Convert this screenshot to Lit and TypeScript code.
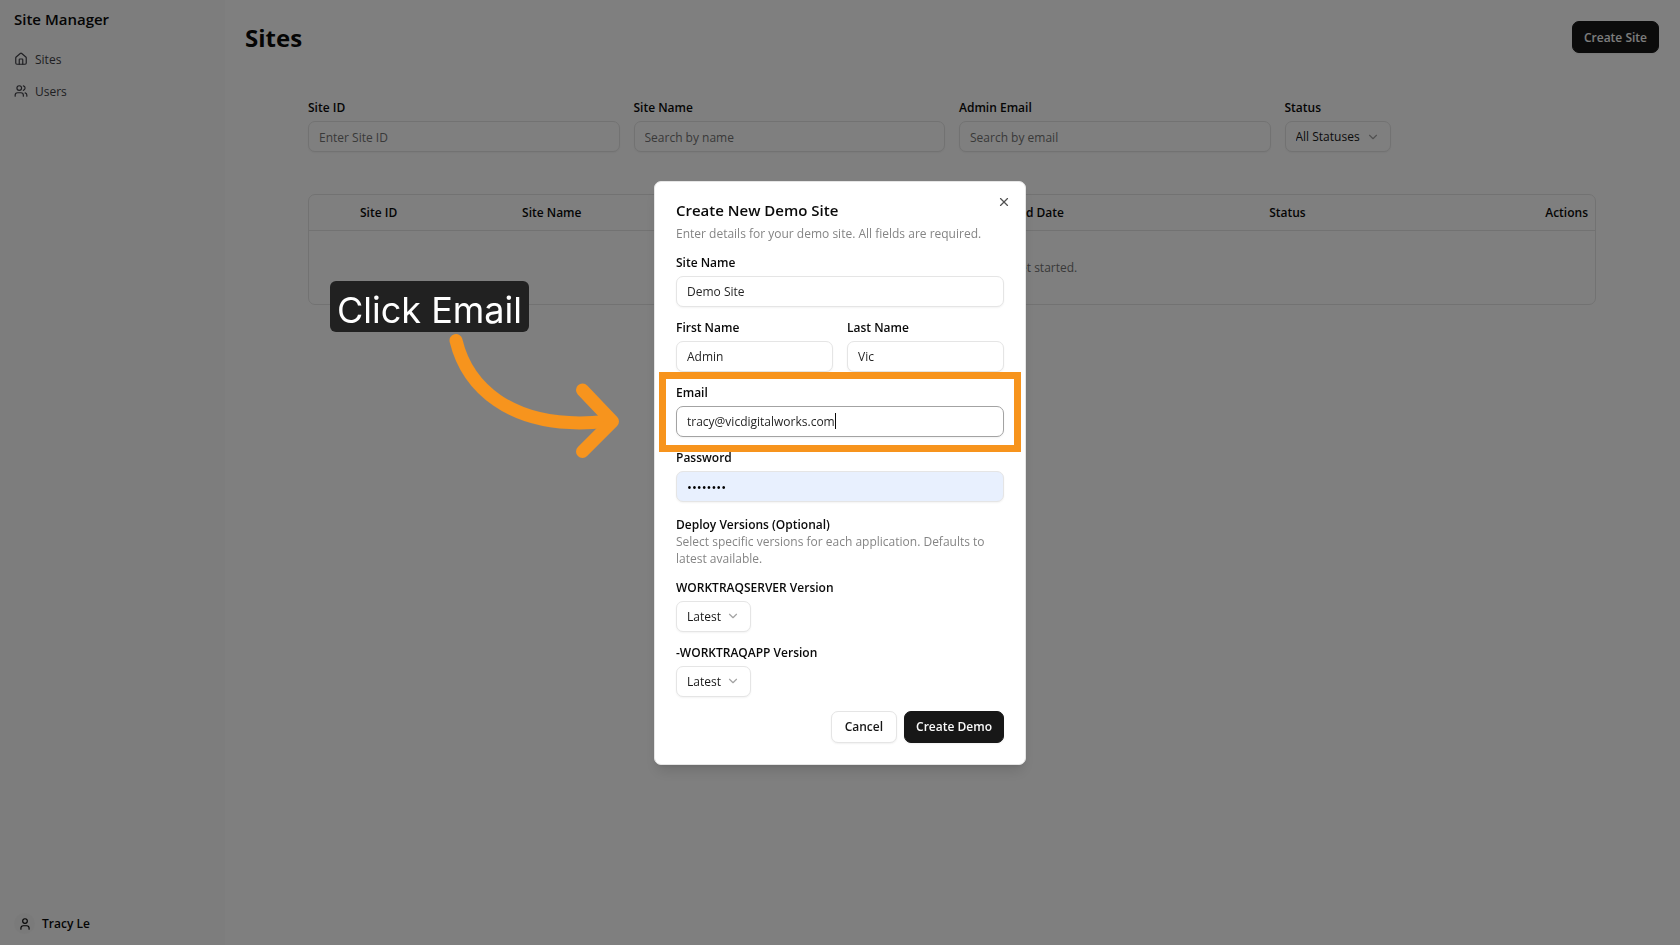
import { LitElement, html, css, svg } from "lit";
import { customElement, property, state, query } from "lit/decorators.js";

const icon = (body: unknown, size = 14, width = 2) => html`<svg
  class="icon"
  width=${size}
  height=${size}
  viewBox="0 0 24 24"
  fill="none"
  stroke="currentColor"
  stroke-width=${width}
  stroke-linecap="round"
  stroke-linejoin="round"
  aria-hidden="true"
>${body}</svg>`;

const house = svg`<path d="M15 21v-8a1 1 0 0 0-1-1h-4a1 1 0 0 0-1 1v8"/><path d="M3 10a2 2 0 0 1 .709-1.528l7-5.999a2 2 0 0 1 2.582 0l7 5.999A2 2 0 0 1 21 10v9a2 2 0 0 1-2 2H5a2 2 0 0 1-2-2z"/>`;
const users = svg`<path d="M16 21v-2a4 4 0 0 0-4-4H6a4 4 0 0 0-4 4v2"/><circle cx="9" cy="7" r="4"/><path d="M22 21v-2a4 4 0 0 0-3-3.87"/><path d="M16 3.13a4 4 0 0 1 0 7.75"/>`;
const user = svg`<path d="M19 21v-2a4 4 0 0 0-4-4H9a4 4 0 0 0-4 4v2"/><circle cx="12" cy="7" r="4"/>`;
const chevron = svg`<path d="m6 9 6 6 6-6"/>`;
const cross = svg`<path d="M18 6 6 18"/><path d="m6 6 12 12"/>`;

const shared = css`
  * {
    box-sizing: border-box;
  }
  :host {
    display: block;
    font-family: "Open Sans", "Noto Sans", sans-serif;
    font-size: 12px;
    line-height: 17px;
    color: #0a0a0a;
  }
  h1,
  h2,
  h3,
  p {
    margin: 0;
  }
  .icon {
    display: block;
    flex: none;
  }
  button {
    font: inherit;
    font-weight: 600;
    height: 32px;
    padding: 0 13px;
    border-radius: 7px;
    border: 1px solid #e5e5e5;
    background: #fff;
    color: #171717;
    white-space: nowrap;
    box-shadow: 0 1px 2px rgba(0, 0, 0, 0.06);
  }
  button.primary {
    border-color: #171717;
    background: #171717;
    color: #fafafa;
    padding: 0 11px;
  }
`;

@customElement("text-field")
class TextField extends LitElement {
  static styles = [
    shared,
    css`
      .field {
        display: grid;
        gap: 7px;
      }
      label {
        font-weight: 600;
        line-height: 13px;
      }
      .box {
        display: grid;
        align-items: center;
        position: relative;
      }
      input {
        width: 100%;
        height: 31px;
        padding: 1px 10px 0;
        border: 1px solid #e5e5e5;
        border-radius: 7px;
        background: #fff;
        color: #262626;
        font: inherit;
        outline: none;
        box-shadow: 0 1px 2px rgba(0, 0, 0, 0.05);
      }
      input::placeholder {
        color: #737373;
        opacity: 1;
      }
      .active input {
        border-color: #a3a3a3;
      }
      .filled input {
        background: #e8f0fe;
        color: #000;
        font-size: 13px;
      }
      .caret {
        position: absolute;
        width: 1px;
        height: 16px;
        background: #0a0a0a;
      }
    `,
  ];
  @property() label = "";
  @property() type = "text";
  @property() value = "";
  @property() hint = "";
  @property({ type: Boolean }) active = false;
  @property({ type: Boolean }) filled = false;
  @state() private caret = 0;
  @query("input") private input!: HTMLInputElement;

  firstUpdated() {
    if (!this.active) return;
    const ctx = document.createElement("canvas").getContext("2d")!;
    const s = getComputedStyle(this.input);
    ctx.font = `${s.fontWeight} ${s.fontSize} ${s.fontFamily}`;
    this.caret = Math.round(11 + ctx.measureText(this.value).width);
  }

  render() {
    return html`<div class="field ${this.active ? "active" : ""} ${this.filled ? "filled" : ""}">
      <label for="control">${this.label}</label>
      <div class="box">
        <input
          id="control"
          type=${this.type}
          .value=${this.value}
          placeholder=${this.hint}
          autocomplete="off"
        />
        ${this.caret ? html`<span class="caret" style="left:${this.caret}px"></span>` : ""}
      </div>
    </div>`;
  }
}

@customElement("select-field")
class SelectField extends LitElement {
  static styles = [
    shared,
    css`
      .field {
        display: grid;
        gap: 7px;
        justify-items: start;
      }
      label {
        font-weight: 600;
        line-height: 13px;
      }
      .box {
        display: inline-grid;
        align-items: center;
      }
      select,
      .mark {
        grid-area: 1 / 1;
      }
      select {
        appearance: none;
        height: 31px;
        padding: 0 29px 0 10px;
        border: 1px solid #e5e5e5;
        border-radius: 7px;
        background: #fff;
        color: #171717;
        font: inherit;
        box-shadow: 0 1px 2px rgba(0, 0, 0, 0.05);
      }
      .mark {
        justify-self: end;
        margin-right: 11px;
        color: #a3a3a3;
        pointer-events: none;
      }
    `,
  ];
  @property() label = "";
  @property({ type: Array }) options: string[] = [];
  render() {
    return html`<div class="field">
      <label for="control">${this.label}</label>
      <div class="box">
        <select id="control">${this.options.map((o) => html`<option>${o}</option>`)}</select>
        <span class="mark">${icon(chevron)}</span>
      </div>
    </div>`;
  }
}

@customElement("side-nav")
class SideNav extends LitElement {
  static styles = [
    shared,
    css`
      :host {
        display: flex;
      }
      aside {
        flex: 1;
        display: flex;
        flex-direction: column;
        padding: 9px 14px 11px;
        background: #fafafa;
      }
      .brand {
        font-size: 15px;
        font-weight: 600;
        line-height: 20px;
      }
      nav {
        display: grid;
        gap: 4px;
        margin-top: 16px;
      }
      a {
        display: flex;
        align-items: center;
        gap: 7px;
        height: 28px;
        color: #3f3f46;
        text-decoration: none;
      }
      .account {
        display: flex;
        align-items: center;
        gap: 7px;
        margin-top: auto;
        font-weight: 600;
      }
      .avatar {
        display: grid;
        place-items: center;
        width: 21px;
        height: 21px;
        border-radius: 50%;
        background: #f5f5f5;
      }
    `,
  ];
  render() {
    return html`<aside>
      <div class="brand">Site Manager</div>
      <nav>
        <a href="#sites">${icon(house)}Sites</a>
        <a href="#users">${icon(users)}Users</a>
      </nav>
      <div class="account"><span class="avatar">${icon(user)}</span>Tracy Le</div>
    </aside>`;
  }
}

@customElement("sites-page")
class SitesPage extends LitElement {
  static styles = [
    shared,
    css`
      main {
        padding: 21px 21px 21px 20px;
      }
      header {
        display: flex;
        justify-content: space-between;
        align-items: flex-start;
      }
      h1 {
        font-size: 24px;
        line-height: 34px;
        font-weight: 700;
      }
      .content {
        max-width: 1288px;
        margin: 46px auto 0;
      }
      .filters {
        display: grid;
        grid-template-columns: repeat(4, minmax(0, 1fr));
        gap: 14px;
        margin-bottom: 42px;
      }
      .frame {
        border: 1px solid #e5e5e5;
        border-radius: 7px;
      }
      table {
        width: 100%;
        table-layout: fixed;
        border-collapse: collapse;
      }
      th {
        height: 35px;
        padding: 0 7px;
        text-align: left;
        font-weight: 600;
        border-bottom: 1px solid #e5e5e5;
      }
      th:last-child {
        text-align: right;
      }
      td {
        height: 74px;
        text-align: center;
        color: #737373;
      }
      .pick {
        width: 44px;
      }
      .id {
        width: 12.6%;
      }
      .name {
        width: 36.2%;
      }
      .date {
        width: 21.9%;
      }
    `,
  ];
  render() {
    return html`<main>
      <header>
        <h1>Sites</h1>
        <button class="primary">Create Site</button>
      </header>
      <div class="content">
        <div class="filters">
          <text-field label="Site ID" hint="Enter Site ID"></text-field>
          <text-field label="Site Name" hint="Search by name"></text-field>
          <text-field label="Admin Email" hint="Search by email"></text-field>
          <select-field label="Status" .options=${["All Statuses"]}></select-field>
        </div>
        <div class="frame">
          <table>
            <thead>
              <tr>
                <th class="pick"></th>
                <th class="id">Site ID</th>
                <th class="name">Site Name</th>
                <th class="date">Created Date</th>
                <th>Status</th>
                <th>Actions</th>
              </tr>
            </thead>
            <tbody>
              <tr>
                <td colspan="6">No sites found yet. Create one to get started.</td>
              </tr>
            </tbody>
          </table>
        </div>
      </div>
    </main>`;
  }
}

@customElement("create-dialog")
class CreateDialog extends LitElement {
  static styles = [
    shared,
    css`
      .dialog {
        position: relative;
        width: 372px;
        max-width: 100vw;
        padding: 21px;
        border: 1px solid #e5e5e5;
        border-radius: 7px;
        background: #fff;
        box-shadow: 0 9px 14px -3px rgba(0, 0, 0, 0.12), 0 3px 5px -3px rgba(0, 0, 0, 0.12);
      }
      .close {
        position: absolute;
        top: 13px;
        right: 14px;
        width: 14px;
        height: 14px;
        padding: 0;
        border: 0;
        background: none;
        box-shadow: none;
        color: #525252;
      }
      h2 {
        font-size: 15px;
        line-height: 15px;
        font-weight: 600;
      }
      .muted {
        color: #858585;
      }
      h2 + .muted {
        margin-top: 7px;
      }
      form {
        display: grid;
        gap: 14px;
        margin-top: 14px;
      }
      .pair {
        display: grid;
        grid-template-columns: 1fr 1fr;
        gap: 14px;
      }
      h3 {
        font-size: 12px;
        line-height: 17px;
        font-weight: 600;
      }
      .actions {
        display: flex;
        justify-content: flex-end;
        gap: 7px;
      }
      .target {
        position: relative;
      }
      .outline {
        position: absolute;
        z-index: 1;
        inset: -14px -17px -15px -17px;
        border: 7px solid #f7941d;
        pointer-events: none;
      }
      .callout {
        position: absolute;
        left: -325px;
        top: 99px;
        pointer-events: none;
      }
      .tip {
        display: block;
        width: max-content;
        padding: 7px 7px 0;
        border-radius: 6px;
        background: #212121;
        color: #fff;
        font-family: "Inter", sans-serif;
        font-size: 36px;
        line-height: 44px;
        white-space: nowrap;
      }
      .arrow {
        display: block;
        margin-left: 117px;
      }
    `,
  ];
  render() {
    return html`<section class="dialog" role="dialog" aria-labelledby="title">
      <h2 id="title">Create New Demo Site</h2>
      <p class="muted">Enter details for your demo site. All fields are required.</p>
      <form>
        <text-field label="Site Name" value="Demo Site"></text-field>
        <div class="pair">
          <text-field label="First Name" value="Admin"></text-field>
          <text-field label="Last Name" value="Vic"></text-field>
        </div>
        <div class="target">
          <text-field label="Email" value="tracy@vicdigitalworks.com" active></text-field>
          <span class="outline"></span>
        </div>
        <text-field label="Password" type="password" value="password" filled></text-field>
        <div>
          <h3>Deploy Versions (Optional)</h3>
          <p class="muted">
            Select specific versions for each application. Defaults to latest available.
          </p>
        </div>
        <select-field label="WORKTRAQSERVER Version" .options=${["Latest"]}></select-field>
        <select-field label="-WORKTRAQAPP Version" .options=${["Latest"]}></select-field>
        <div class="actions">
          <button type="button">Cancel</button>
          <button type="button" class="primary">Create Demo</button>
        </div>
      </form>
      <button class="close" aria-label="Close">${icon(cross)}</button>
      <div class="callout">
        <span class="tip">Click Email</span>
        <svg class="arrow" width="176" height="126" viewBox="447 332 176 126" fill="none" stroke="#f7941d" stroke-width="13" stroke-linecap="round" stroke-linejoin="round" aria-hidden="true">
          <path d="M456 340.500C466 382 506 432 606 421.500" />
          <path d="M582.500 390 612.500 421.500 582.500 451.500" />
        </svg>
      </div>
    </section>`;
  }
}

@customElement("app-root")
class AppRoot extends LitElement {
  static styles = [
    shared,
    css`
      .layout {
        display: grid;
        grid-template-columns: 225px minmax(0, 1fr);
        min-height: 100vh;
        background: #fff;
      }
      .overlay {
        position: fixed;
        inset: 0;
        display: grid;
        place-items: center;
        background: rgba(0, 0, 0, 0.5);
      }
    `,
  ];
  render() {
    return html`<div class="layout">
        <side-nav></side-nav>
        <sites-page></sites-page>
      </div>
      <div class="overlay"><create-dialog></create-dialog></div>`;
  }
}
